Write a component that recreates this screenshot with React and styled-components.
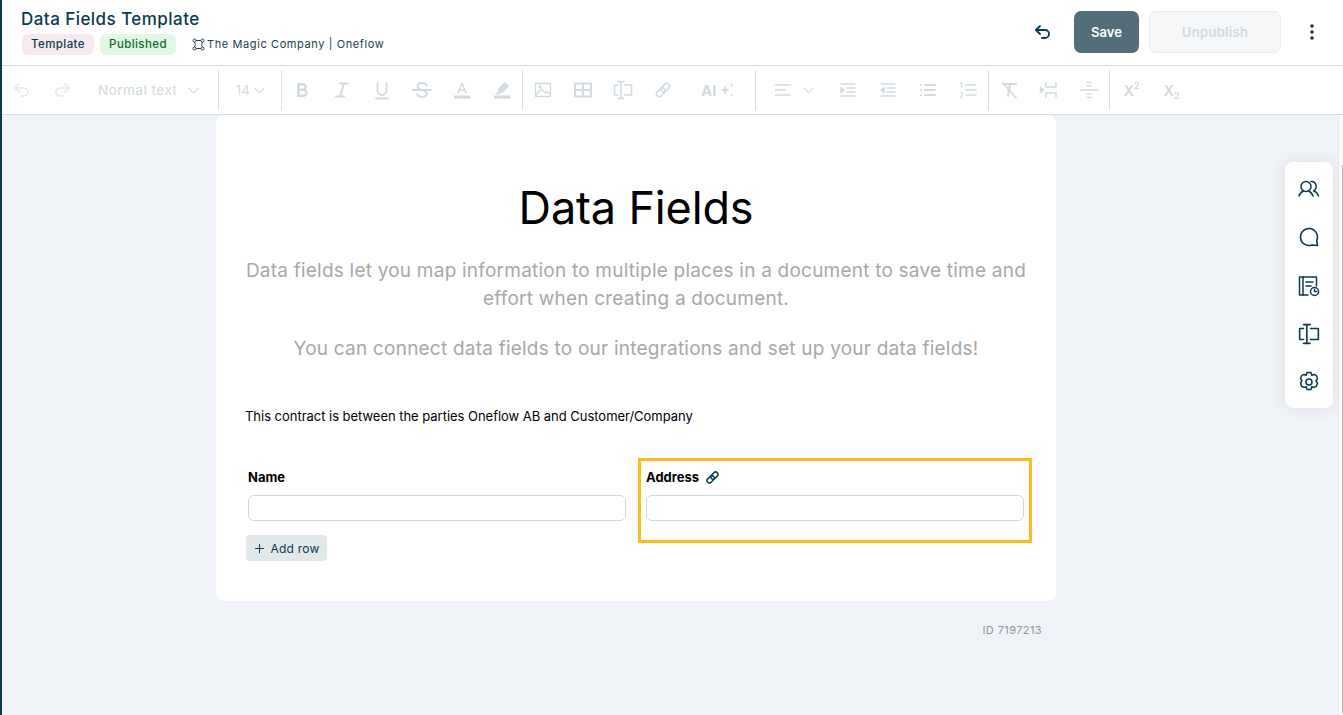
import React from "react";
import styled, { createGlobalStyle } from "styled-components";

const Global = createGlobalStyle`
  html, body { margin: 0; padding: 0; height: 100%; background: #f0f3f7; overflow: hidden; }
  * { box-sizing: border-box; }
  #root { height: 100%; }
`;

const Page = styled.div`
  position: relative;
  width: 1343px;
  height: 715px;
  display: flex;
  flex-direction: column;
  border-left: 2px solid #0b3b4f;
  font-family: Inter, "Liberation Sans", sans-serif;
  color: #0b3b4f;
  overflow: hidden;
`;

const Header = styled.header`
  height: 66px;
  flex: none;
  background: #fff;
  border-bottom: 1px solid #d3dce1;
  display: flex;
  align-items: center;
  padding: 0 29px 0 19px;
`;

const TitleBlock = styled.div`
  flex: 1;
  display: flex;
  flex-direction: column;
  gap: 4px;
  padding-bottom: 3px;
`;

const Title = styled.h1`
  margin: 0;
  font-size: 17px;
  line-height: 22px;
  font-weight: 500;
  letter-spacing: 0.45px;
  color: #0b3b4f;
`;

const Meta = styled.div`
  display: flex;
  align-items: center;
  padding-left: 1px;
`;

const Badge = styled.span`
  height: 21px;
  width: ${(p) => p.$w}px;
  margin-right: 6px;
  border-radius: 6px;
  background: ${(p) => p.$bg};
  color: ${(p) => p.$fg};
  font-size: 11.5px;
  font-weight: 500;
  letter-spacing: 0.4px;
  display: flex;
  align-items: center;
  justify-content: center;
`;

const Company = styled.span`
  margin-left: 10px;
  display: flex;
  align-items: center;
  gap: 2px;
  font-size: 11px;
  font-weight: 400;
  letter-spacing: 0.6px;
  color: #24404e;
`;

const Actions = styled.div`
  display: flex;
  align-items: center;
  padding-bottom: 2px;
`;

const IconButton = styled.div`
  display: flex;
  align-items: center;
  justify-content: center;
  color: #0b3b4f;
`;

const SaveButton = styled.div`
  width: 65px;
  height: 42px;
  margin-left: 21px;
  border-radius: 7px;
  background: #526e7a;
  color: #fff;
  font-size: 13px;
  font-weight: 600;
  display: flex;
  align-items: center;
  justify-content: center;
`;

const UnpublishButton = styled.div`
  width: 132px;
  height: 42px;
  margin-left: 10px;
  margin-right: 29px;
  border-radius: 7px;
  background: #f5f7f9;
  border: 1px solid #e8edf0;
  color: #d0dae0;
  font-size: 13px;
  font-weight: 600;
  letter-spacing: 0.3px;
  display: flex;
  align-items: center;
  justify-content: center;
`;

const Toolbar = styled.div`
  height: 49px;
  flex: none;
  background: #fff;
  border-bottom: 1px solid #d3dce1;
  display: flex;
  align-items: center;
  color: #d0dae0;
`;

const Tool = styled.div`
  width: ${(p) => p.$w || 40}px;
  height: 40px;
  flex: none;
  display: flex;
  align-items: center;
  justify-content: ${(p) => (p.$start ? "flex-start" : "center")};
  padding-left: ${(p) => p.$pl || 0}px;
  gap: ${(p) => p.$gap || 0}px;
  font-size: ${(p) => p.$fs || 13}px;
  letter-spacing: ${(p) => p.$ls ?? 0.3}px;
  color: ${(p) => p.$fg || "#d0dae0"};
`;

const AIText = styled.span`
  font-size: 15px;
  font-weight: 700;
  letter-spacing: 0;
`;

const Sep = styled.div`
  width: 1px;
  height: 40px;
  flex: none;
  background: #d8e0e4;
`;

const Main = styled.main`
  flex: 1;
  display: flex;
  flex-direction: column;
  padding-left: 214px;
  background: #f0f3f7;
`;

const Card = styled.article`
  width: 840px;
  height: 486px;
  background: #fff;
  border-radius: 8px;
  padding: 65px 29px 0;
`;

const Heading = styled.h2`
  margin: 0;
  text-align: center;
  font-size: 45px;
  line-height: 56px;
  font-weight: 400;
  letter-spacing: -0.15px;
  color: #000;
`;

const Lead = styled.p`
  margin: ${(p) => p.$mt}px 0 0;
  text-align: center;
  font-size: 19px;
  line-height: 28px;
  letter-spacing: 0.22px;
  color: #a8a8a8;
`;

const Contract = styled.p`
  margin: 43px 0 0;
  font-size: 13px;
  line-height: 20px;
  letter-spacing: -0.03px;
  color: #000;
`;

const Fields = styled.div`
  margin-top: 32px;
  display: flex;
  gap: 12px;
  padding-left: 3px;
`;

const LeftCol = styled.div`
  width: 378px;
  flex: none;
  padding-top: 7px;
`;

const AddressBox = styled.div`
  width: 394px;
  flex: none;
  height: 85px;
  border: 3px solid #fdbc1f;
  padding: 4px 5px 0;
`;

const Label = styled.div`
  height: 24px;
  display: flex;
  align-items: center;
  gap: 6px;
  font-size: 13px;
  font-weight: 700;
  color: #000;
`;

const LinkMark = styled.span`
  display: flex;
  color: #0b3b4f;
`;

const Input = styled.div`
  height: 26px;
  margin-top: 6px;
  background: #fff;
  border: 1px solid #cfd8dc;
  border-radius: 6px;
`;

const AddRow = styled.div`
  width: 81px;
  height: 26px;
  margin: 14px 0 0 -2px;
  border-radius: 4px;
  background: #e2e7ea;
  color: #0b3b4f;
  font-size: 12px;
  letter-spacing: 0.2px;
  display: flex;
  align-items: center;
  justify-content: center;
  gap: 6px;
`;

const DocId = styled.div`
  width: 840px;
  padding: 22px 14px 0 0;
  text-align: right;
  font-size: 11px;
  letter-spacing: 0.4px;
  color: #8f959e;
`;

const Rail = styled.aside`
  position: absolute;
  left: 1283px;
  top: 162px;
  width: 48px;
  height: 246px;
  border-radius: 8px;
  background: #fff;
  box-shadow: 0 0 16px rgba(60, 90, 110, 0.1);
  display: flex;
  flex-direction: column;
  align-items: center;
  justify-content: space-between;
  padding: 14px 0;
  color: #0b3b4f;
`;

const ScrollTrack = styled.div`
  position: absolute;
  top: 115px;
  right: 0;
  bottom: 0;
  width: 5px;
  background: #fbfbfb;
  border-left: 1px solid #e8e8e8;
  padding: 50px 0 2px 3px;
`;

const ScrollThumb = styled.div`
  width: 1px;
  height: 100%;
  background: #bdbdbd;
`;

const Ic = ({ s = 20, sw = 1.6, fill = "none", children, vb = "0 0 20 20" }) => (
  <svg width={s} height={s} viewBox={vb} fill={fill} stroke={fill === "none" ? "currentColor" : "none"} strokeWidth={sw} strokeLinecap="round" strokeLinejoin="round">
    {children}
  </svg>
);

const UndoIc = ({ s = 20, sw = 1.8 }) => (
  <Ic s={s} sw={sw}><path d="M7 4 3 8l4 4" /><path d="M3 8h9a4 4 0 0 1 0 8H9" /></Ic>
);
const RedoIc = () => (
  <Ic><path d="m13 4 4 4-4 4" /><path d="M17 8H8a4 4 0 0 0 0 8h3" /></Ic>
);
const Chev = ({ s = 13 }) => (
  <Ic s={s} sw={1.1} vb="0 0 14 14"><path d="m2 4.5 5 5 5-5" /></Ic>
);
const FieldIc = ({ s = 20, sw = 1.6 }) => (
  <Ic s={s} sw={sw}>
    <path d="M5 1.500h6M8 1.500v17M5 18.500h6" />
    <path d="M5 5H1.500v10H5M11.500 5h7v10h-7" />
  </Ic>
);
const LinkIc = ({ s = 18, sw = 1.8 }) => (
  <Ic s={s} sw={sw}>
    <g transform="rotate(-45 10 10)">
      <rect x="1" y="6.800" width="11" height="6.400" rx="3.200" />
      <rect x="8" y="6.800" width="11" height="6.400" rx="3.200" />
    </g>
  </Ic>
);

const Icons = {
  bold: <Ic fill="currentColor"><path d="M5 3h6a4 4 0 0 1 3 6.600A4.200 4.200 0 0 1 12 17H5zm2.800 2.400v3.300h3a1.650 1.650 0 0 0 0-3.300zm0 5.600v3.600h3.600a1.800 1.800 0 0 0 0-3.600z" /></Ic>,
  italic: <Ic sw={2}><path d="M8 3.500h8M4 16.500h8M12 3.500l-4 13" /></Ic>,
  underline: <Ic sw={1.8}><path d="M5.500 3v7.500a4.500 4.500 0 0 0 9 0V3" /><path d="M4 18.500h12" /></Ic>,
  strike: <Ic sw={1.8}><path d="M1 10h18" /><path d="M14.500 5.500C14 4 12 3 10 3 7.500 3 5.500 4.300 5.500 6.200c0 1.500 1 2.800 4.500 3.800 3.500 1 4.800 2 4.800 3.800 0 2-2.200 3.200-4.800 3.200-2.300 0-4.300-1-5-2.800" /></Ic>,
  color: <Ic><path d="M6 13 10 3l4 10M7.200 10h5.600" strokeWidth={1.500} /><rect x="2" y="15.500" width="16" height="3" fill="currentColor" stroke="none" /></Ic>,
  marker: <Ic fill="currentColor"><path d="m12.500 2 4.500 4-6 6.500-1.500.3L5 15l-.7-.7 1.800-3.500.2-2zM2 15.500h16v3H2z" /></Ic>,
  image: <Ic sw={1.300}><rect x="2.500" y="3.500" width="15" height="13" /><path d="m3 15 5.500-6 4 4 1.500-1.500 3 3" /><circle cx="7" cy="7" r="0.800" /></Ic>,
  table: <Ic sw={2}><rect x="2" y="3.500" width="16" height="13" /><path d="M2 10h16M10 3.500v13" /></Ic>,
  align: <Ic sw={1.500}><path d="M2.500 5h15M2.500 10h10M2.500 15h15" /></Ic>,
  indent: <Ic sw={1.500}><path d="M3 4h14M9 8h8M9 12h8M3 16h14" /><path d="M3 7.500 6 10l-3 2.500z" fill="currentColor" /></Ic>,
  outdent: <Ic sw={1.500}><path d="M3 4h14M9 8h8M9 12h8M3 16h14" /><path d="M6 7.500 3 10l3 2.500z" fill="currentColor" /></Ic>,
  bullets: <Ic sw={1.600}><path d="M7 5h10M7 10h10M7 15h10M3 5h.1M3 10h.1M3 15h.1" strokeWidth={2} /></Ic>,
  numbers: <Ic sw={1.600}><path d="M8 5h10M8 10h10M8 15h10" /><text x="1.500" y="8" fontSize="7" fontWeight="700" fill="currentColor" stroke="none">1</text><text x="1" y="17.500" fontSize="7" fontWeight="700" fill="currentColor" stroke="none">2</text></Ic>,
  clear: <Ic sw={1.700}><path d="M4 4h13M11 4l-2 12" strokeWidth={2.200} /><path d="m4 3 13 15" /></Ic>,
  lineh: <Ic sw={1.500}><path d="M7 3v4h10V3M7 17v-4h10v4" /><path d="M1.500 7.500 4.500 10l-3 2.500z" fill="currentColor" /></Ic>,
  divider: <Ic sw={1.500}><path d="M1 10h18M8 2.500h4M8 6h4M8 14h4M8 17.500h4" /></Ic>,
  sparkle: <Ic s={18} fill="currentColor"><path d="m8 5 1.300 3.700L13 10l-3.700 1.300L8 15l-1.300-3.700L3 10l3.700-1.300zM15 2l.6 1.900 1.900.6-1.900.6-.6 1.900-.6-1.900-1.900-.6 1.900-.6zM15 14l.6 1.500 1.400.5-1.400.5-.6 1.500-.6-1.500-1.400-.5 1.400-.5z" /></Ic>,
};

const ScriptX = styled.span`
  font-size: 14px;
  font-weight: 600;
  letter-spacing: 0;
`;

const ScriptNum = styled.span`
  font-size: 9px;
  font-weight: 600;
  letter-spacing: 0;
  position: relative;
  top: ${(p) => p.$top}px;
`;

const CompanyIcon = () => (
  <svg width="13" height="13" viewBox="0 0 13 13" fill="none" stroke="#24404e" strokeWidth="1">
    <circle cx="2.500" cy="2.500" r="1.500" /><circle cx="10.500" cy="2.500" r="1.500" /><circle cx="2.500" cy="10.500" r="1.500" /><circle cx="10.500" cy="10.500" r="1.500" />
    <path d="M4 2.500h5M4 10.500h5M2.500 4c1 1.500 1 3.500 0 5M10.500 4c-1 1.500-1 3.500 0 5" />
  </svg>
);

const Kebab = () => (
  <svg width="4" height="18" viewBox="0 0 4 18" fill="#0b3b4f"><circle cx="2" cy="3" r="1.800" /><circle cx="2" cy="9" r="1.800" /><circle cx="2" cy="15" r="1.800" /></svg>
);

const People = () => (
  <Ic s={24} sw={1.500} vb="0 0 24 24">
    <circle cx="9" cy="10.500" r="5" />
    <path d="M2 20c1-3 2.800-4.400 4.500-5M11.500 15c1.700.6 3.500 2 4.500 5" />
    <path d="M14 5.600a5 5 0 0 1 2.500 9.400M17 15c2 .6 3.500 2 4.500 5" />
  </Ic>
);
const Bubble = () => (
  <Ic s={24} sw={1.600} vb="0 0 24 24"><path d="M12 3.500a8.500 8.500 0 1 0 3 16.450l5.500.55-.8-5A8.500 8.500 0 0 0 12 3.500z" /></Ic>
);
const History = () => (
  <Ic s={24} sw={1.500} vb="0 0 24 24">
    <path d="M19.500 12V3H2.500v18H11" /><path d="M6 3v18M9 8h7M9 12h5" />
    <circle cx="17.500" cy="17.500" r="4" /><path d="M17.500 15.500v2h2" />
  </Ic>
);
const Gear = () => (
  <Ic s={24} sw={1.500} vb="0 0 24 24">
    <circle cx="12" cy="12" r="3" />
    <path d="M10 2.500h4l.8 2.800 2-.8 2.500.9 1.200 3.200-1.500 2.400 1.500 2-1.200 3.500-2.500.9-2-.8-.8 2.900h-4l-.8-2.900-2 .8-2.500-.9L3.500 13l1.500-2-1.500-2.400 1.200-3.200 2.500-.9 2 .8z" />
  </Ic>
);

export default function App() {
  return (
    <>
      <Global />
      <Page>
        <Header>
          <TitleBlock>
            <Title>Data Fields Template</Title>
            <Meta>
              <Badge $w={72} $bg="#f8e9ee" $fg="#0b3b4f">Template</Badge>
              <Badge $w={76} $bg="#e3f7e7" $fg="#0f6b2e">Published</Badge>
              <Company><CompanyIcon />The Magic Company | Oneflow</Company>
            </Meta>
          </TitleBlock>
          <Actions>
            <IconButton><UndoIc s={20} sw={1.800} /></IconButton>
            <SaveButton>Save</SaveButton>
            <UnpublishButton>Unpublish</UnpublishButton>
            <IconButton><Kebab /></IconButton>
          </Actions>
        </Header>
        <Toolbar>
          <Tool $fg="#e3e9ec"><UndoIc sw={1.500} /></Tool>
          <Tool $fg="#e3e9ec"><RedoIc /></Tool>
          <Tool $w={136} $start $pl={16} $gap={10} $fs={13.500} $ls={0.5}>Normal text <Chev /></Tool>
          <Sep />
          <Tool $w={62} $start $pl={17} $gap={3} $fs={12.500}>14 <Chev s={13} /></Tool>
          <Sep />
          <Tool>{Icons.bold}</Tool>
          <Tool>{Icons.italic}</Tool>
          <Tool>{Icons.underline}</Tool>
          <Tool>{Icons.strike}</Tool>
          <Tool>{Icons.color}</Tool>
          <Tool>{Icons.marker}</Tool>
          <Sep />
          <Tool>{Icons.image}</Tool>
          <Tool>{Icons.table}</Tool>
          <Tool><FieldIc /></Tool>
          <Tool><LinkIc /></Tool>
          <Tool $w={72} $start $pl={18} $gap={2}><AIText>AI</AIText>{Icons.sparkle}</Tool>
          <Sep />
          <Tool $w={72} $start $pl={17} $gap={9}>{Icons.align}<Chev /></Tool>
          <Tool>{Icons.indent}</Tool>
          <Tool>{Icons.outdent}</Tool>
          <Tool>{Icons.bullets}</Tool>
          <Tool>{Icons.numbers}</Tool>
          <Sep />
          <Tool>{Icons.clear}</Tool>
          <Tool>{Icons.lineh}</Tool>
          <Tool>{Icons.divider}</Tool>
          <Sep />
          <Tool $pl={3}><ScriptX>X</ScriptX><ScriptNum $top={-5}>2</ScriptNum></Tool>
          <Tool $pl={3}><ScriptX>X</ScriptX><ScriptNum $top={5}>2</ScriptNum></Tool>
        </Toolbar>
        <Main>
          <Card>
            <Heading>Data Fields</Heading>
            <Lead $mt={21}>Data fields let you map information to multiple places in a document to save time and effort when creating a document.</Lead>
            <Lead $mt={22}>You can connect data fields to our integrations and set up your data fields!</Lead>
            <Contract>This contract is between the parties Oneflow AB and Customer/Company</Contract>
            <Fields>
              <LeftCol>
                <Label>Name</Label>
                <Input />
                <AddRow><Ic s={11} sw={1.100} vb="0 0 12 12"><path d="M6 1.500v9M1.500 6h9" /></Ic>Add row</AddRow>
              </LeftCol>
              <AddressBox>
                <Label>Address <LinkMark><LinkIc s={15} sw={2} /></LinkMark></Label>
                <Input />
              </AddressBox>
            </Fields>
          </Card>
          <DocId>ID 7197213</DocId>
        </Main>
        <Rail>
          <People />
          <Bubble />
          <History />
          <FieldIc s={22} sw={1.500} />
          <Gear />
        </Rail>
        <ScrollTrack><ScrollThumb /></ScrollTrack>
      </Page>
    </>
  );
}
